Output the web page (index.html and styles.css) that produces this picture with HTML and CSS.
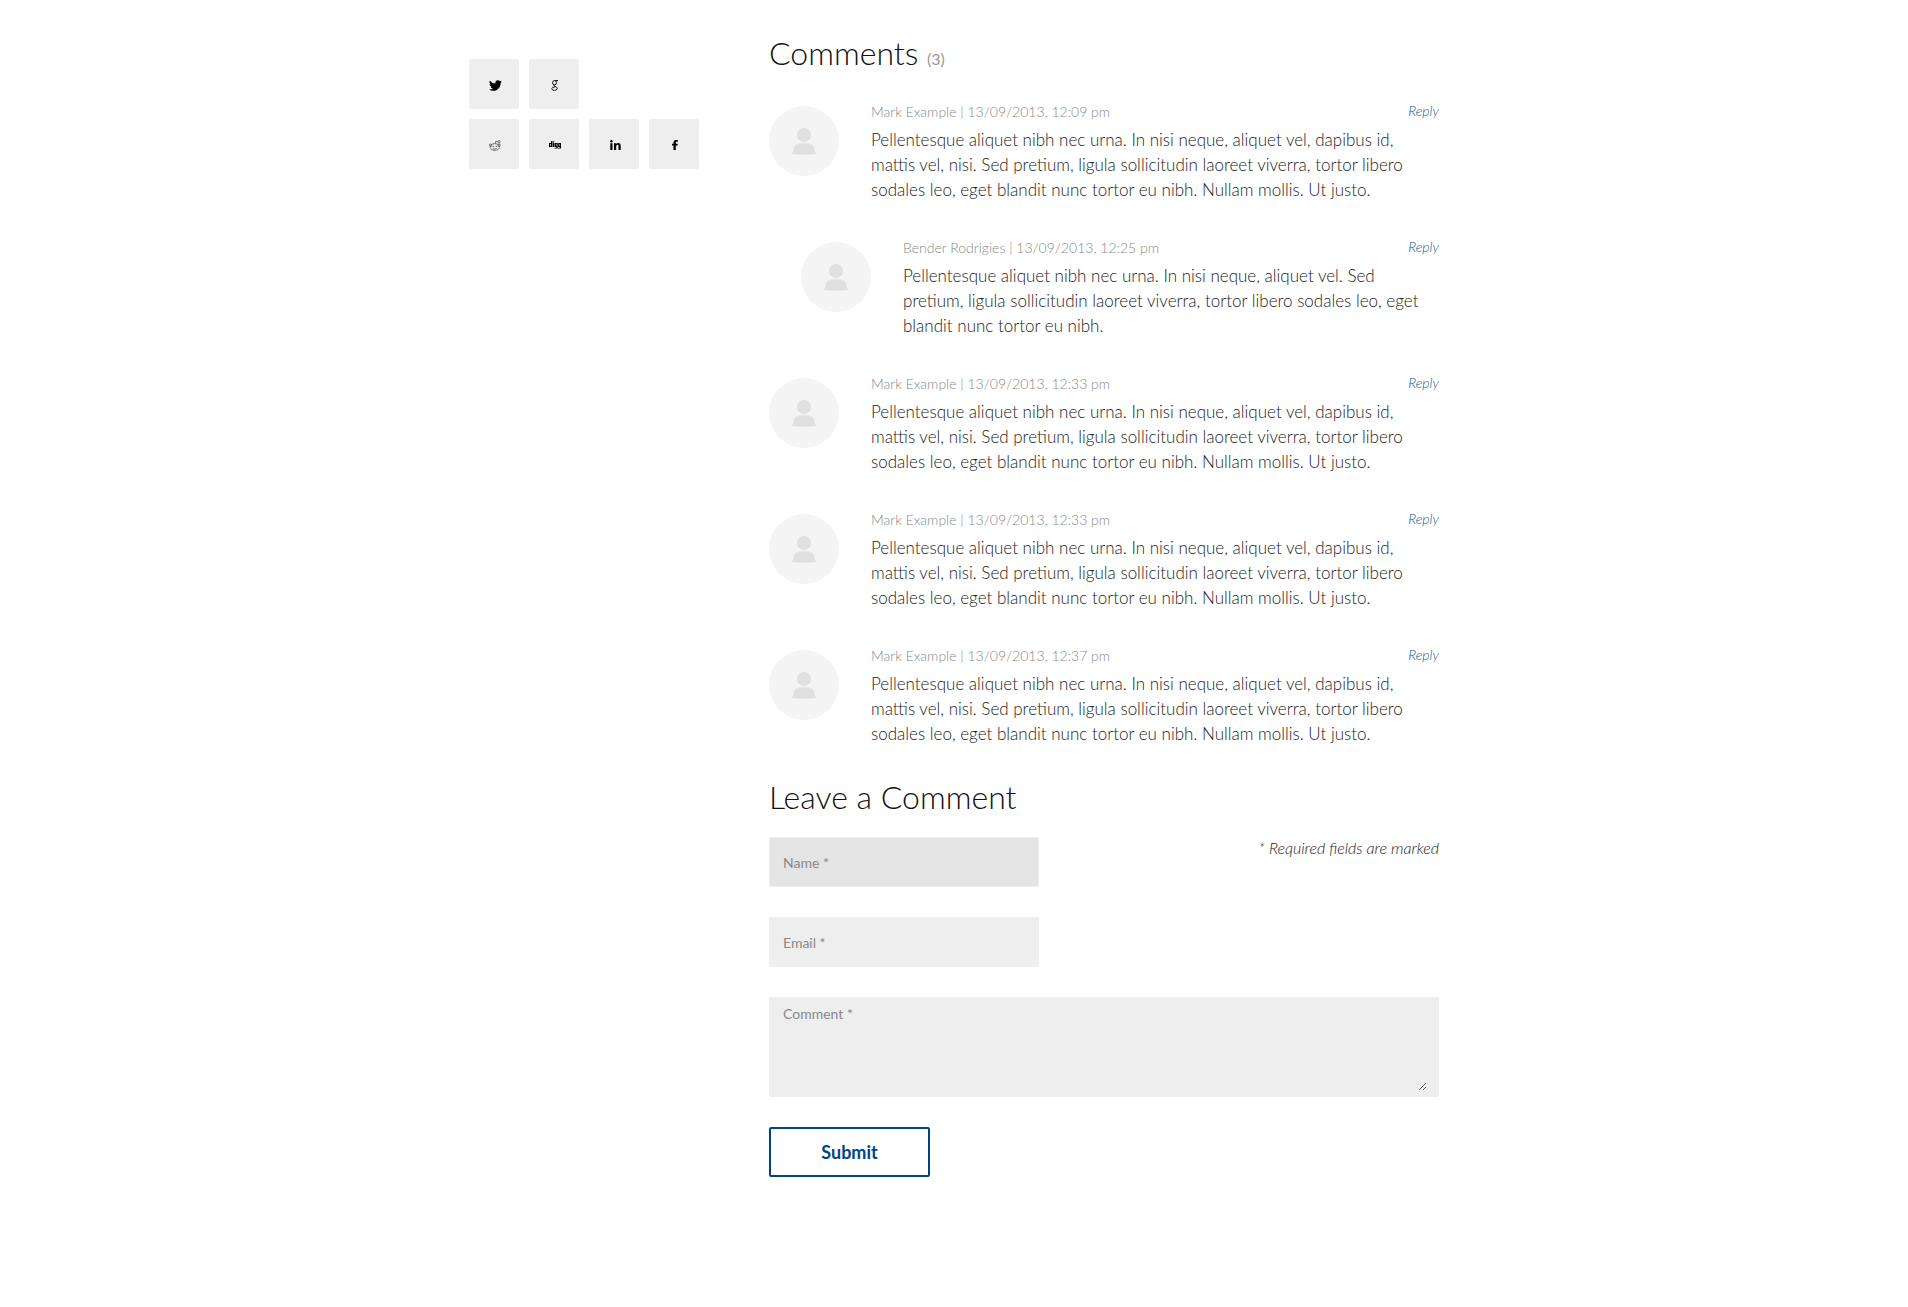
FILE: index.html
```html
<!DOCTYPE html>
<html lang="en">
<head>
<meta charset="utf-8">
<meta name="viewport" content="width=device-width, initial-scale=1">
<title>Comments</title>
<link rel="stylesheet" href="styles.css">
</head>
<body>
<svg class="sprite" aria-hidden="true">
  <symbol id="person" viewBox="0 0 24 28">
    <circle cx="12" cy="8" r="7.100"/>
    <path d="M0 26.800L2.600 18.800Q3.200 17.600 5 17.200Q12 15.200 19 17.200Q20.800 17.600 21.400 18.800L24 26.800Q12 28.800 0 26.800Z"/>
  </symbol>
</svg>
<div class="page">
  <aside class="share" aria-label="Share">
    <div class="share-row">
      <a class="share-link" href="#" aria-label="Twitter"><svg width="13" height="13" viewBox="0 0 24 24"><path d="M24 4.600a10 10 0 0 1-2.800.8 5 5 0 0 0 2.100-2.700 10 10 0 0 1-3.100 1.200 4.900 4.900 0 0 0-8.400 4.500A14 14 0 0 1 1.700 3.100a4.900 4.900 0 0 0 1.500 6.600 5 5 0 0 1-2.200-.6v.1a4.900 4.900 0 0 0 3.900 4.800 5 5 0 0 1-2.200.1 4.900 4.900 0 0 0 4.600 3.400A10 10 0 0 1 0 19.500 14 14 0 0 0 7.500 21.700c9.100 0 14-7.500 14-14v-.6A10 10 0 0 0 24 4.600z"/></svg></a>
      <a class="share-link" href="#" aria-label="Google"><svg width="8" height="11" viewBox="0 0 8 11" class="line"><ellipse cx="3.500" cy="2.700" rx="2" ry="2.100"/><path d="M4 .6H7M3 4.800Q2.300 5.500 3.800 6.200Q6.400 7.200 6.200 8.700Q5.800 10.400 3.400 10.400Q.8 10.300.8 8.600Q1 6.900 4.200 6.800"/></svg></a>
    </div>
    <div class="share-row">
      <a class="share-link" href="#" aria-label="Reddit"><svg width="12" height="11" viewBox="0 0 12 11" class="line thin"><ellipse cx="5.800" cy="7" rx="4.500" ry="3.300"/><circle cx="1.600" cy="5.200" r="1.200"/><circle cx="10.100" cy="5.200" r="1.200"/><circle cx="10" cy="1.800" r="1.200"/><path d="M6 3.700L6.800 1.200L8.800 1.700M3.800 8.500Q5.800 9.800 7.800 8.500"/><circle cx="4.300" cy="6.500" r=".4"/><circle cx="7.400" cy="6.500" r=".4"/></svg></a>
      <a class="share-link" href="#" aria-label="Digg"><svg width="12" height="8" viewBox="0 0 12 8"><path fill-rule="evenodd" d="M2 0H3.500V6H0V2H2ZM1.300 3V5H2V3ZM4 2H5.200V6H4ZM4 .3H5.200V1.400H4ZM5.700 2H8.700V7.500H5.700V6.700H7.400V6H5.700ZM7 3V5H7.500V3ZM9.100 2H12V7.500H9.100V6.700H10.800V6H9.100ZM10.300 3V5H10.800V3Z"/></svg></a>
      <a class="share-link" href="#" aria-label="LinkedIn"><svg width="11" height="10" viewBox="0 0 11 10"><path d="M.3 3.200H2.500V10H.3ZM4 3.200H6.100V4.100Q6.800 3 8.200 3Q10.700 3 10.700 6V10H8.500V6.400Q8.500 4.800 7.400 4.800Q6.200 4.800 6.200 6.400V10H4Z"/><circle cx="1.400" cy="1.200" r="1.200"/></svg></a>
      <a class="share-link" href="#" aria-label="Facebook"><svg width="6" height="10" viewBox="0 0 6 10"><path d="M1.500 10V5.600H0V3.700H1.500V2.500Q1.500 0 4 0H5.800V1.800H4.600Q3.800 1.800 3.800 2.600V3.700H5.800L5.500 5.600H3.800V10Z"/></svg></a>
    </div>
  </aside>
  <main class="main">
    <h2 class="title">Comments <small class="count">(3)</small></h2>
    <div class="comments">
      <article class="comment">
        <div class="avatar"><svg class="person"><use href="#person"/></svg></div>
        <div class="body">
          <div class="meta"><span>Mark Example | 13/09/2013, 12:09 pm</span><a class="reply" href="#">Reply</a></div>
          <p class="text">Pellentesque aliquet nibh nec urna. In nisi neque, aliquet vel, dapibus id, mattis vel, nisi. Sed pretium, ligula sollicitudin laoreet viverra, tortor libero sodales leo, eget blandit nunc tortor eu nibh. Nullam mollis. Ut justo.</p>
        </div>
      </article>
      <article class="comment nested">
        <div class="avatar"><svg class="person"><use href="#person"/></svg></div>
        <div class="body">
          <div class="meta"><span>Bender Rodrigies | 13/09/2013, 12:25 pm</span><a class="reply" href="#">Reply</a></div>
          <p class="text">Pellentesque aliquet nibh nec urna. In nisi neque, aliquet vel. Sed pretium, ligula sollicitudin laoreet viverra, tortor libero sodales leo, eget blandit nunc tortor eu nibh.</p>
        </div>
      </article>
      <article class="comment">
        <div class="avatar"><svg class="person"><use href="#person"/></svg></div>
        <div class="body">
          <div class="meta"><span>Mark Example | 13/09/2013, 12:33 pm</span><a class="reply" href="#">Reply</a></div>
          <p class="text">Pellentesque aliquet nibh nec urna. In nisi neque, aliquet vel, dapibus id, mattis vel, nisi. Sed pretium, ligula sollicitudin laoreet viverra, tortor libero sodales leo, eget blandit nunc tortor eu nibh. Nullam mollis. Ut justo.</p>
        </div>
      </article>
      <article class="comment">
        <div class="avatar"><svg class="person"><use href="#person"/></svg></div>
        <div class="body">
          <div class="meta"><span>Mark Example | 13/09/2013, 12:33 pm</span><a class="reply" href="#">Reply</a></div>
          <p class="text">Pellentesque aliquet nibh nec urna. In nisi neque, aliquet vel, dapibus id, mattis vel, nisi. Sed pretium, ligula sollicitudin laoreet viverra, tortor libero sodales leo, eget blandit nunc tortor eu nibh. Nullam mollis. Ut justo.</p>
        </div>
      </article>
      <article class="comment">
        <div class="avatar"><svg class="person"><use href="#person"/></svg></div>
        <div class="body">
          <div class="meta"><span>Mark Example | 13/09/2013, 12:37 pm</span><a class="reply" href="#">Reply</a></div>
          <p class="text">Pellentesque aliquet nibh nec urna. In nisi neque, aliquet vel, dapibus id, mattis vel, nisi. Sed pretium, ligula sollicitudin laoreet viverra, tortor libero sodales leo, eget blandit nunc tortor eu nibh. Nullam mollis. Ut justo.</p>
        </div>
      </article>
    </div>
    <h2 class="title">Leave a Comment</h2>
    <form class="form">
      <div class="first-row">
        <input class="field active" type="text" placeholder="Name *" aria-label="Name">
        <span class="required">* Required fields are marked</span>
      </div>
      <input class="field" type="email" placeholder="Email *" aria-label="Email">
      <textarea class="area" placeholder="Comment *" aria-label="Comment"></textarea>
      <button class="submit" type="submit">Submit</button>
    </form>
  </main>
</div>
</body>
</html>
```
FILE: styles.css
```css
* { box-sizing: border-box; }
body {
  margin: 0;
  background: #fff;
  color: #222;
  font-family: Lato, "Liberation Sans", sans-serif;
  font-size: 17px;
  font-weight: 300;
  line-height: 25px;
}
.sprite { position: absolute; width: 0; height: 0; }
.page {
  display: grid;
  grid-template-columns: 240px minmax(0, 1fr);
  gap: 60px;
  max-width: 970px;
  margin: 0 auto;
  padding: 31px 0 64px;
}
.share {
  display: flex;
  flex-direction: column;
  gap: 10px;
  padding-top: 28px;
}
.share-row { display: flex; gap: 10px; }
.share-link {
  display: flex;
  align-items: center;
  justify-content: center;
  width: 50px;
  height: 50px;
  padding: 2px 0 0 2px;
  border-radius: 2px;
  background: #eee;
}
.line { fill: none; stroke: #111; stroke-width: 1; }
.thin { stroke: #444; stroke-width: .7; }
.title {
  margin: 0;
  color: #111;
  font-size: 32px;
  font-weight: 300;
  line-height: 44px;
}
.count { color: #999; font-size: 16px; font-weight: 400; }
.comments {
  display: flex;
  flex-direction: column;
  gap: 34px;
  padding: 19px 0 29px;
}
.comment { display: flex; gap: 32px; }
.nested { padding-left: 32px; }
.avatar {
  flex: none;
  display: flex;
  align-items: center;
  justify-content: center;
  width: 70px;
  height: 70px;
  margin-top: 6px;
  border-radius: 50%;
  background: #f4f4f4;
}
.person { width: 24px; height: 28px; fill: #e0e0e0; }
.body { flex: 1; min-width: 0; }
.meta {
  display: flex;
  justify-content: space-between;
  margin-bottom: 3px;
  color: #888;
  font-size: 14px;
  line-height: 24px;
}
.reply {
  color: #0d559a;
  font-style: italic;
  line-height: 21px;
  text-decoration: none;
}
.text { margin: 0; }
.form {
  display: flex;
  flex-direction: column;
  align-items: flex-start;
  gap: 30px;
  padding-top: 18px;
}
.first-row { display: flex; justify-content: space-between; width: 100%; }
.required { font-size: 16px; font-style: italic; line-height: 22px; }
.field, .area {
  border: 1px solid #eee;
  border-radius: 2px;
  background: #eee;
  color: #444;
  font: 400 14px/20px Lato, "Liberation Sans", sans-serif;
  outline: 0;
}
.field { width: 270px; height: 50px; padding: 0 13px; }
.active { background: #e4e4e4; }
.field::placeholder, .area::placeholder { color: #888; opacity: 1; }
.area {
  display: block;
  width: 100%;
  height: 100px;
  padding: 1px 2px;
  border-width: 6px 12px;
  resize: both;
}
.submit {
  width: 161px;
  height: 50px;
  border: 2px solid #048;
  border-radius: 2px;
  background: #fff;
  color: #048;
  font: 700 18px/24px Lato, "Liberation Sans", sans-serif;
}
```
